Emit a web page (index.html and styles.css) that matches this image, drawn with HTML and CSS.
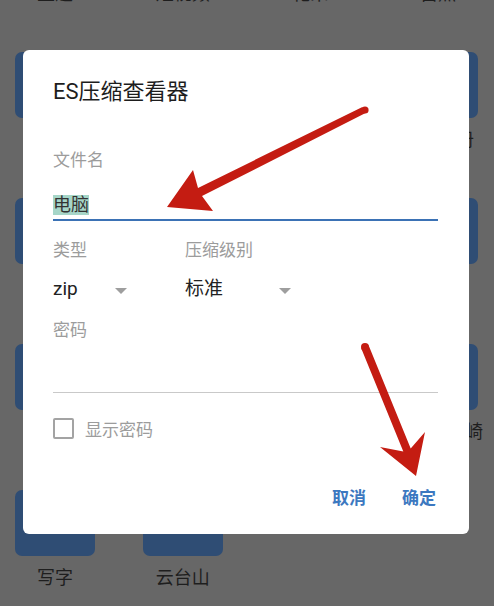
FILE: index.html
```html
<!DOCTYPE html>
<html lang="zh-CN">
<head>
    <meta charset="UTF-8">
    <meta name="viewport" content="width=device-width, initial-scale=1.0">
    <title>ES压缩查看器</title>
    <link rel="stylesheet" href="styles.css">
</head>
<body>
    <div class="home">
        <div class="item"><div class="tile"></div><p>主题</p></div>
        <div class="item"><div class="tile"></div><p>短视频</p></div>
        <div class="item"><div class="tile"></div><p>花朵</p></div>
        <div class="item"><div class="tile"></div><p>自然</p></div>

        <div class="item"><div class="tile"></div><p>风景</p></div>
        <div class="item"><div class="tile"></div><p>照片</p></div>
        <div class="item"><div class="tile"></div><p>城市</p></div>
        <div class="item"><div class="tile"></div><p>旅行相册</p></div>

        <div class="item"><div class="tile"></div><p>电脑</p></div>
        <div class="item"><div class="tile"></div><p>桌面</p></div>
        <div class="item"><div class="tile"></div><p>文档</p></div>
        <div class="item"><div class="tile"></div><p>音乐</p></div>

        <div class="item"><div class="tile"></div><p>海边</p></div>
        <div class="item"><div class="tile"></div><p>夜景</p></div>
        <div class="item"><div class="tile"></div><p>动物</p></div>
        <div class="item"><div class="tile"></div><p>去日本长崎</p></div>

        <div class="item"><div class="tile"></div><p>写字</p></div>
        <div class="item"><div class="tile"></div><p>云台山</p></div>
    </div>

    <div class="dialog">
        <h2 class="dialog-title">ES压缩查看器</h2>

        <p class="label label-first">文件名</p>
        <div class="input input-active"><span class="selected">电脑</span></div>

        <div class="two-col labels-row">
            <p class="label col-a">类型</p>
            <p class="label">压缩级别</p>
        </div>
        <div class="two-col select-row">
            <div class="select select-a col-a">zip</div>
            <div class="select select-b">标准</div>
        </div>

        <p class="label label-pass">密码</p>
        <div class="input input-pass"></div>

        <label class="check-row">
            <span class="checkbox"></span>
            <span class="check-text">显示密码</span>
        </label>

        <div class="actions">
            <button class="btn">取消</button>
            <button class="btn">确定</button>
        </div>
    </div>

    <!-- red annotation arrows -->
    <svg class="arrows" width="494" height="606" viewBox="0 0 494 606">
        <g fill="#c41c12">
            <circle cx="365" cy="110" r="3.6"/>
            <polygon points="362.4,106.9 198,188 193,170 167,207 213,211 202,196 365.6,113.1"/>
            <circle cx="365" cy="347" r="4"/>
            <polygon points="368.7,345.5 410.7,448.5 425,432 416,476 380,447 403.3,451.5 361.3,348.5"/>
        </g>
    </svg>
</body>
</html>
```

FILE: styles.css
```css
body {
    margin: 0;
    width: 494px;
    height: 606px;
    overflow: hidden;
    position: relative;
    background-color: #676767;
    font-family: Roboto, "Noto Sans CJK SC", sans-serif;
}
.home {
    display: grid;
    grid-template-columns: repeat(4, 80px);
    column-gap: 47.67px;
    row-gap: 46px;
    padding-left: 15px;
    margin-top: -94px;
}
.item {
    display: flex;
    flex-direction: column;
    align-items: center;
}
.tile {
    width: 80px;
    height: 66px;
    border-radius: 7px;
    background-color: #2f4d74;
}
.item p {
    margin: 10px 0 0;
    line-height: 24px;
    font-size: 18px;
    color: #1e1e1e;
    white-space: nowrap;
}

.dialog {
    position: absolute;
    left: 23px;
    top: 50px;
    width: 446px;
    box-sizing: border-box;
    padding: 28px 33px 24px 30px;
    background-color: #fff;
    border-radius: 6px;
    display: flex;
    flex-direction: column;
}
.dialog-title {
    margin: 0;
    font-size: 22px;
    line-height: 28px;
    font-weight: normal;
    color: #1d1d1d;
}
.label {
    margin: 0;
    font-size: 17px;
    line-height: 24px;
    color: #9c9c9c;
}
.label-first {
    margin-top: 42px;
}
.input {
    margin-right: -2px;
    border-bottom: 1px solid #c9c9c9;
}
.input-active {
    margin-top: 19px;
    line-height: 26px;
    padding-bottom: 2px;
    border-bottom: 2px solid #3b72b5;
}
.selected {
    display: inline-block;
    height: 20px;
    line-height: 20px;
    vertical-align: middle;
    font-size: 18px;
    color: #333;
    background-color: #a6d6c8;
}
.two-col {
    display: flex;
}
.col-a {
    width: 132px;
}
.labels-row {
    margin-top: 17px;
}
.select-row {
    margin-top: 15px;
}
.select {
    position: relative;
    line-height: 24px;
    font-size: 19px;
    color: #222;
}
.select::after {
    content: "";
    position: absolute;
    top: 11px;
    width: 0;
    height: 0;
    border-left: 6px solid transparent;
    border-right: 6px solid transparent;
    border-top: 6px solid #9e9e9e;
}
.select-a::after {
    left: 62px;
}
.select-b::after {
    left: 94px;
}
.label-pass {
    margin-top: 17px;
}
.input-pass {
    height: 50px;
}
.check-row {
    display: flex;
    align-items: center;
    gap: 11px;
    margin-top: 25px;
    height: 21px;
}
.checkbox {
    width: 17px;
    height: 17px;
    border: 2px solid #a3a3a3;
    border-radius: 2px;
}
.check-text {
    font-size: 17px;
    color: #9c9c9c;
}
.actions {
    display: flex;
    justify-content: flex-end;
    gap: 36px;
    margin-top: 47px;
}
.btn {
    padding: 0;
    border: none;
    background: none;
    font-family: inherit;
    font-size: 17px;
    line-height: 24px;
    font-weight: bold;
    color: #3c78c0;
}
.arrows {
    position: absolute;
    left: 0;
    top: 0;
    pointer-events: none;
}
```
